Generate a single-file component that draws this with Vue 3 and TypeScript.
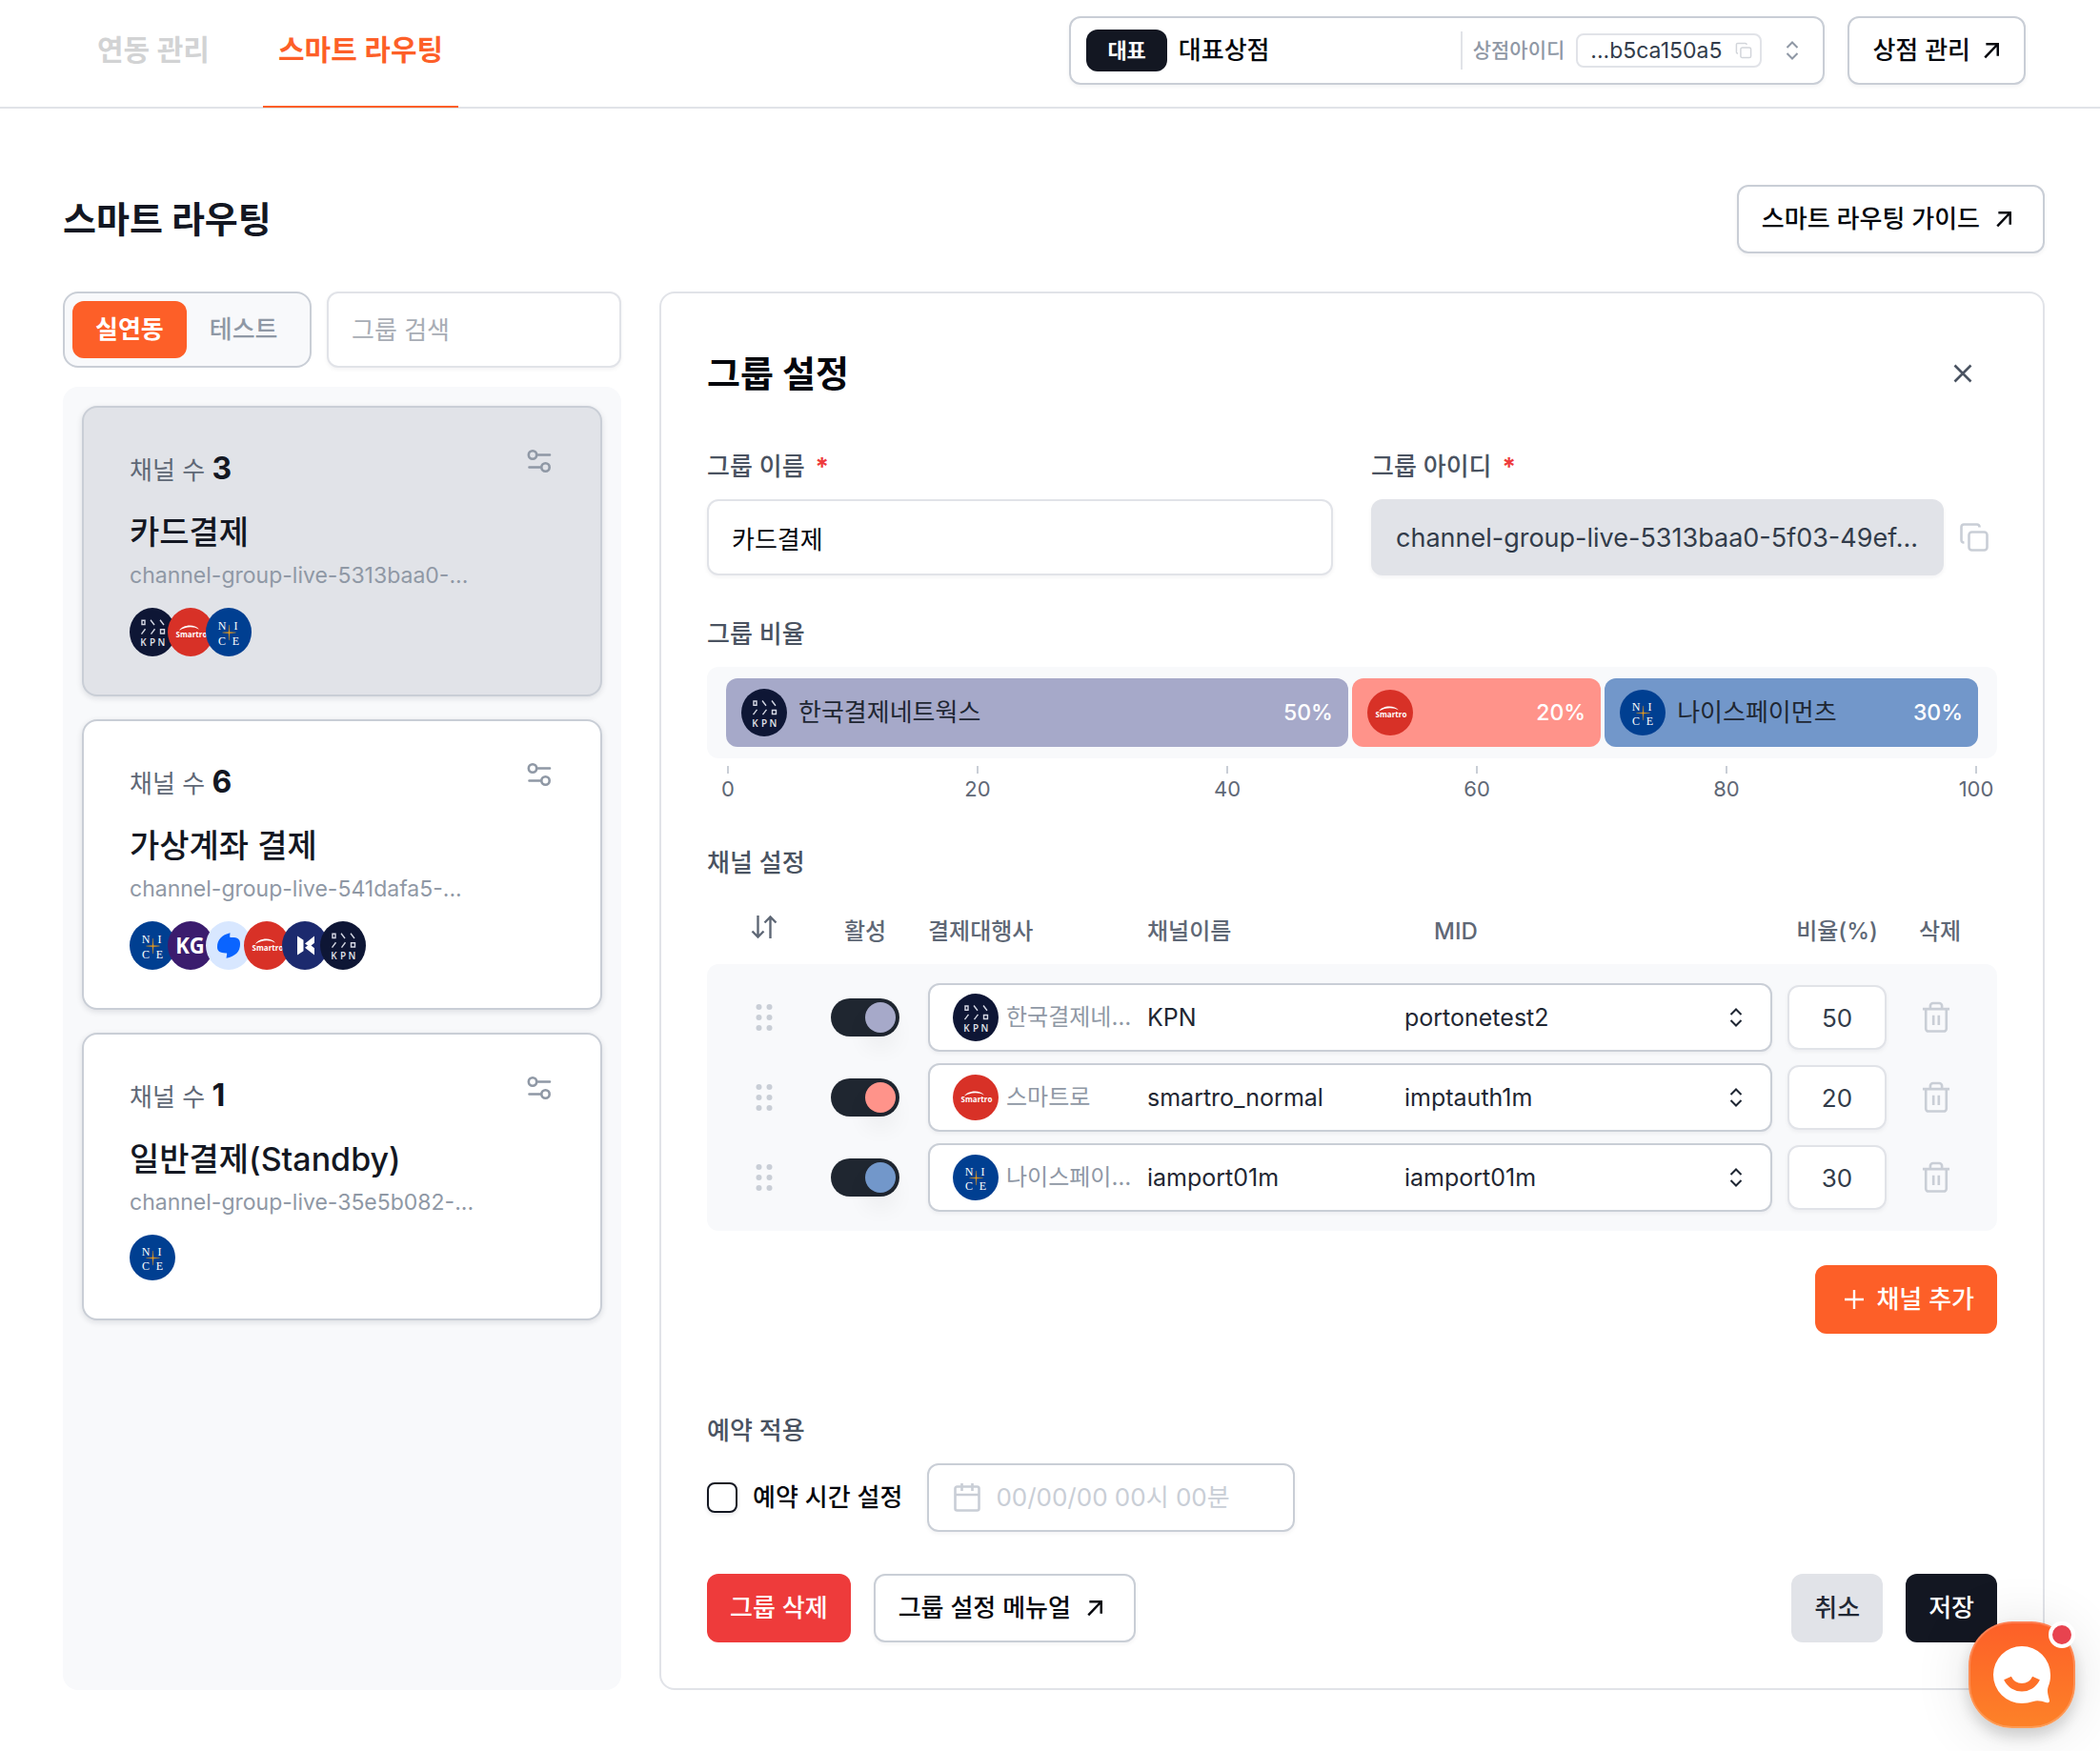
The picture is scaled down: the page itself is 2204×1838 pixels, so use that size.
<script setup lang="ts">
import { h, ref, type FunctionalComponent, type VNode } from 'vue'

type PgId = 'kpn' | 'smartro' | 'nice' | 'kg' | 'toss' | 'kicc'

interface Group {
  id: string
  name: string
  count: number
  pgs: PgId[]
}

interface Channel {
  pg: PgId
  pgName: string
  name: string
  mid: string
  ratio: number
  color: string
  enabled: boolean
}

const disc = (fill: string) => h('ellipse', { cx: 24, cy: 24, rx: 24, ry: 24, fill })
const letter = (cls: string, x: number, y: number, value: string) =>
  h('text', { class: cls, x, y, 'text-anchor': 'middle' }, value)

const logos: Record<PgId, () => VNode[]> = {
  kpn: () => [
    disc('#0e1635'),
    h('path', {
      d: 'M13 12.500h3v4h-3zM22 12l4 5M32 12l4 5M16.500 21l-4 5M26.500 21l-4 5M32.500 21.500h4v4h-4z',
      fill: 'none',
      stroke: '#d5d8e4',
      'stroke-width': 1.4,
    }),
    letter('pg-kpn', 14.5, 38, 'K'),
    letter('pg-kpn', 24, 38, 'P'),
    letter('pg-kpn', 33.5, 38, 'N'),
  ],
  smartro: () => [
    disc('#d83127'),
    h('path', { d: 'M12 22.500c3-5.500 16-7.500 21-1-6-3.500-14-3-21 1z', fill: '#fff' }),
    letter('pg-smartro', 25, 29, 'Smartro'),
  ],
  nice: () => [
    disc('#003f91'),
    letter('pg-nice', 17, 21.5, 'N'),
    letter('pg-nice', 31.5, 21.5, 'I'),
    letter('pg-nice', 17, 36.5, 'C'),
    letter('pg-nice', 31.5, 36.5, 'E'),
    h('path', {
      d: 'M17.500 24.500l6.500-.6.500-7 .5 7 6.500.6-6.500.6-.5 7-.5-7z',
      fill: '#e89a1c',
      stroke: '#e89a1c',
      'stroke-width': 0.3,
    }),
  ],
  kg: () => [disc('#3b1c6e'), letter('pg-kg', 23.5, 32, 'KG')],
  toss: () => [
    disc('#d8e7ff'),
    h('path', {
      d: 'M25.500 11.500C17 13.500 12 18 12 25.500c0 4.500 3 6 9 6h.5c.8 0 .8.5.6 1.500L21.500 36.500C31 34.500 36 30 36 22.500c0-5-2.500-6.500-8.500-6.500H26c-.8 0-1-.5-.8-1.300z',
      fill: '#0a64ff',
    }),
  ],
  kicc: () => [
    disc('#1c2a6e'),
    h('path', { d: 'M16 14.500l6.500 4v11l-6.500 4zM34 14.500l-10 7.500 3 2-3 2 10 7.500v-7l-3.500-2.500 3.500-2.500z', fill: '#fff' }),
  ],
}

const PgLogo: FunctionalComponent<{ pg: PgId; height?: number }> = (props) =>
  h(
    'svg',
    {
      viewBox: '0 0 48 48',
      width: 48,
      height: props.height ?? (props.pg === 'kpn' ? 50 : 48),
      preserveAspectRatio: 'none',
      'aria-hidden': 'true',
    },
    logos[props.pg](),
  )
PgLogo.props = ['pg', 'height']

const groups: Group[] = [
  { id: 'channel-group-live-5313baa0-...', name: '카드결제', count: 3, pgs: ['kpn', 'smartro', 'nice'] },
  { id: 'channel-group-live-541dafa5-...', name: '가상계좌 결제', count: 6, pgs: ['nice', 'kg', 'toss', 'smartro', 'kicc', 'kpn'] },
  { id: 'channel-group-live-35e5b082-...', name: '일반결제(Standby)', count: 1, pgs: ['nice'] },
]

const selected = ref(0)
const keyword = ref('')
const groupName = ref('카드결제')
const groupId = 'channel-group-live-5313baa0-5f03-49ef...'
const scheduled = ref(false)
const scheduleAt = ref('')
const ticks = [0, 20, 40, 60, 80, 100]

const channels = ref<Channel[]>([
  { pg: 'kpn', pgName: '한국결제네트웍스', name: 'KPN', mid: 'portonetest2', ratio: 50, color: '#a6a9c9', enabled: true },
  { pg: 'smartro', pgName: '스마트로', name: 'smartro_normal', mid: 'imptauth1m', ratio: 20, color: '#ff938a', enabled: true },
  { pg: 'nice', pgName: '나이스페이먼츠', name: 'iamport01m', mid: 'iamport01m', ratio: 30, color: '#7297ca', enabled: true },
])
</script>

<template>
  <svg class="sprite" aria-hidden="true">
    <symbol id="ic-external" viewBox="0 0 16 16">
      <path d="M2 14.500L14 2M3 2h11v11" fill="none" stroke="currentColor" stroke-width="2.200" />
    </symbol>
    <symbol id="ic-chevrons" viewBox="0 0 16 24">
      <path d="M2.500 9L8 3.500 13.500 9M2.500 15L8 20.500 13.500 15" fill="none" stroke="currentColor" stroke-width="2" />
    </symbol>
    <symbol id="ic-copy" viewBox="0 0 32 32">
      <g fill="none" stroke="currentColor" stroke-width="2.600" stroke-linejoin="round">
        <rect x="10.500" y="10.500" width="19" height="19" rx="3" />
        <path d="M5.500 21.500H5a2.500 2.500 0 0 1-2.500-2.500V5A2.500 2.500 0 0 1 5 2.500h14A2.500 2.500 0 0 1 21.500 5v.5" />
      </g>
    </symbol>
    <symbol id="ic-trash" viewBox="0 0 32 36">
      <path d="M1 8.500h30M9.500 8V5a3 3 0 0 1 3-3h7a3 3 0 0 1 3 3v3M4.500 9v21.500a3 3 0 0 0 3 3h17a3 3 0 0 0 3-3V9M13 15.500v11M19 15.500v11" fill="none" stroke="currentColor" stroke-width="2.800" />
    </symbol>
    <symbol id="ic-settings" viewBox="0 0 32 32">
      <g fill="none" stroke="currentColor" stroke-width="2.600" stroke-linecap="round">
        <circle cx="9" cy="9.500" r="4.200" />
        <circle cx="22.500" cy="22.500" r="4.200" />
        <path d="M14 9.500h13M5.500 22.500h12" />
      </g>
    </symbol>
  </svg>

  <div class="page">
    <header class="topbar">
      <nav class="tabs">
        <a href="#integration" class="tab">연동 관리</a>
        <a href="#routing" class="tab active">스마트 라우팅</a>
      </nav>
      <div class="store">
        <span class="badge">대표</span>
        <span class="store-name">대표상점</span>
        <span class="divider"></span>
        <span class="store-label">상점아이디</span>
        <button type="button" class="store-id" aria-label="상점아이디 복사">
          <span>...b5ca150a5</span>
          <svg width="18" height="18"><use href="#ic-copy" /></svg>
        </button>
        <svg class="store-chevrons" width="16" height="24"><use href="#ic-chevrons" /></svg>
        <select class="cover" aria-label="상점 선택"><option>대표상점</option></select>
      </div>
      <a href="#stores" class="btn outline store-link">상점 관리 <svg width="20" height="18"><use href="#ic-external" /></svg></a>
    </header>

    <main class="content">
      <div class="heading">
        <h1>스마트 라우팅</h1>
        <a href="#guide" class="btn outline wide">스마트 라우팅 가이드 <svg width="18" height="18"><use href="#ic-external" /></svg></a>
      </div>

      <div class="columns">
        <section class="groups">
          <div class="filters">
            <div class="segment">
              <button type="button" class="on">실연동</button>
              <button type="button">테스트</button>
            </div>
            <input v-model="keyword" class="field search" type="text" placeholder="그룹 검색" aria-label="그룹 검색" />
          </div>
          <div class="list">
            <article
              v-for="(g, i) in groups"
              :key="g.id"
              class="card"
              :class="{ selected: i === selected }"
              @click="selected = i"
            >
              <div class="card-head">
                <p class="count">채널 수 <strong>{{ g.count }}</strong></p>
                <button type="button" class="icon-btn" aria-label="설정">
                  <svg width="32" height="32"><use href="#ic-settings" /></svg>
                </button>
              </div>
              <h2>{{ g.name }}</h2>
              <p class="gid">{{ g.id }}</p>
              <div class="avatars">
                <PgLogo v-for="p in g.pgs" :key="p" class="avatar" :pg="p" :height="g.pgs.includes('kpn') ? 51 : 48" />
              </div>
            </article>
          </div>
        </section>

        <form class="panel" @submit.prevent>
          <div class="panel-head">
            <h2>그룹 설정</h2>
            <button type="button" class="icon-btn close" aria-label="닫기">
              <svg width="20" height="20" viewBox="0 0 20 20"><path d="M1.500 1.500l17 17M18.500 1.500l-17 17" fill="none" stroke="currentColor" stroke-width="2.600" /></svg>
            </button>
          </div>

          <div class="pair">
            <div>
              <label class="label" for="group-name">그룹 이름 <em>*</em></label>
              <input id="group-name" v-model="groupName" class="field" type="text" />
            </div>
            <div>
              <label class="label" for="group-id">그룹 아이디 <em>*</em></label>
              <div class="id-row">
                <input id="group-id" class="field readonly" type="text" :value="groupId" readonly />
                <button type="button" class="icon-btn copy" aria-label="복사"><svg width="32" height="32"><use href="#ic-copy" /></svg></button>
              </div>
            </div>
          </div>

          <h3 class="label ratio-title">그룹 비율</h3>
          <div class="track">
            <div v-for="c in channels" :key="c.pg" class="bar" :style="{ width: c.ratio + '%', background: c.color }">
              <PgLogo :pg="c.pg" />
              <span v-if="c.ratio > 20" class="bar-name">{{ c.pgName }}</span>
              <span class="bar-pct">{{ c.ratio }}%</span>
            </div>
          </div>
          <div class="axis">
            <span v-for="t in ticks" :key="t" class="tick"><i></i><span>{{ t }}</span></span>
          </div>

          <h3 class="label channel-title">채널 설정</h3>
          <table class="channels">
            <thead>
              <tr>
                <th class="sort-col" aria-label="순서">
                  <svg width="28" height="26" viewBox="0 0 28 26"><path d="M7.500 1v22M1.500 17.500l6 6 6-6M20.500 25V2.500M14.500 8.500l6-6 6 6" fill="none" stroke="currentColor" stroke-width="2.400" /></svg>
                </th>
                <th class="active-col">활성</th>
                <th class="left">결제대행사</th>
                <th class="left">채널이름</th>
                <th class="left">MID</th>
                <th class="ratio-col">비율(%)</th>
                <th class="delete-col">삭제</th>
              </tr>
            </thead>
            <tbody>
              <tr v-for="c in channels" :key="c.pg">
                <td>
                  <svg class="grip" width="20" height="32" viewBox="0 0 20 32">
                    <g fill="currentColor">
                      <circle cx="4.500" cy="5" r="3" /><circle cx="15.500" cy="5" r="3" />
                      <circle cx="4.500" cy="16" r="3" /><circle cx="15.500" cy="16" r="3" />
                      <circle cx="4.500" cy="27" r="3" /><circle cx="15.500" cy="27" r="3" />
                    </g>
                  </svg>
                </td>
                <td class="active-col">
                  <label class="switch">
                    <input v-model="c.enabled" type="checkbox" :aria-label="c.pgName + ' 활성'" />
                    <span class="knob" :style="{ background: c.color }"></span>
                  </label>
                </td>
                <td colspan="3" class="select-col">
                  <div class="select">
                    <PgLogo :pg="c.pg" />
                    <span class="pg-name">{{ c.pgName }}</span>
                    <span class="ch-name">{{ c.name }}</span>
                    <span class="mid">{{ c.mid }}</span>
                    <svg width="16" height="24"><use href="#ic-chevrons" /></svg>
                    <select class="cover" :aria-label="c.pgName + ' 채널'"><option>{{ c.name }}</option></select>
                  </div>
                </td>
                <td class="ratio-col"><input v-model="c.ratio" class="ratio" type="text" :aria-label="c.pgName + ' 비율'" /></td>
                <td class="trash-col">
                  <button type="button" class="icon-btn trash" aria-label="삭제"><svg width="30" height="34"><use href="#ic-trash" /></svg></button>
                </td>
              </tr>
            </tbody>
          </table>
          <div class="add-row">
            <button type="button" class="btn primary">
              <svg width="22" height="22" viewBox="0 0 22 22"><path d="M11 1v20M1 11h20" fill="none" stroke="currentColor" stroke-width="2.400" /></svg>
              채널 추가
            </button>
          </div>

          <h3 class="label schedule-title">예약 적용</h3>
          <div class="schedule">
            <label class="check"><input v-model="scheduled" type="checkbox" />예약 시간 설정</label>
            <div class="date">
              <svg width="32" height="32" viewBox="0 0 32 32"><path d="M3.500 6.500a2 2 0 0 1 2-2h21a2 2 0 0 1 2 2v21a2 2 0 0 1-2 2h-21a2 2 0 0 1-2-2zM3.500 13h25M10.500 1v8M21.500 1v8" fill="none" stroke="currentColor" stroke-width="2.600" /></svg>
              <input v-model="scheduleAt" type="text" placeholder="00/00/00 00시 00분" aria-label="예약 시간" :disabled="!scheduled" />
            </div>
          </div>

          <div class="actions">
            <button type="button" class="btn danger">그룹 삭제</button>
            <a href="#manual" class="btn outline wide">그룹 설정 메뉴얼 <svg width="18" height="18"><use href="#ic-external" /></svg></a>
            <button type="button" class="btn muted">취소</button>
            <button type="submit" class="btn dark">저장</button>
          </div>
        </form>
      </div>
    </main>

    <button type="button" class="chat" aria-label="채팅 상담">
      <svg width="64" height="64" viewBox="0 0 64 64">
        <path d="M32 2a30 30 0 0 1 30 30c0 6-1 9-2.500 13-1.500 5 .5 9 1.500 14 .3 2-1.500 2.500-3 2.200-5-1.200-9-2.700-14-1.200-4 1.300-8 2-12 2a30 30 0 0 1 0-60z" fill="#fff" />
        <path d="M17 35.500c6 13 24 13 30 0" fill="none" stroke="#fd7028" stroke-width="8.500" />
      </svg>
      <span class="dot"></span>
    </button>
  </div>
</template>

<style>
body {
  margin: 0;
  background: #fff;
}
.page svg {
  display: block;
  flex: none;
}

/* payment gateway marks */
.pg-kpn {
  font: 600 10px 'Open Sans', sans-serif;
  fill: #e4e6ee;
}
.pg-smartro {
  font: 700 8px 'Open Sans', sans-serif;
  fill: #fff;
}
.pg-nice {
  font: 12px 'Liberation Serif', serif;
  fill: #fff;
}
.pg-kg {
  font: 700 22px 'Open Sans', sans-serif;
  fill: #fff;
}
</style>

<style scoped>
* {
  box-sizing: border-box;
}
.sprite {
  position: absolute;
  width: 0;
  height: 0;
}
.page,
.page button,
.page input,
.page select {
  font-family: Inter, 'Noto Sans CJK KR', sans-serif;
  line-height: 40px;
}
.page {
  min-height: 100vh;
  font-size: 26px;
  color: #131722;
}
h1,
h2,
h3,
p {
  margin: 0;
}
button {
  cursor: pointer;
}

/* top bar */
.topbar {
  display: flex;
  align-items: center;
  height: 114px;
  padding: 0 78px 6px 86px;
  border-bottom: 2px solid #e1e3e8;
}
.tabs {
  display: flex;
  align-self: stretch;
  gap: 40px;
  margin-right: auto;
  margin-bottom: -7px;
}
.tab {
  display: flex;
  align-items: center;
  padding: 0 16px 8px;
  border-bottom: 2px solid transparent;
  font-size: 30px;
  font-weight: 600;
  color: #d2d3d4;
  text-decoration: none;
}
.tab.active {
  border-color: #fd5f28;
  color: #fd5f28;
}
.store {
  position: relative;
  display: flex;
  align-items: center;
  width: 793px;
  height: 72px;
  padding: 0 24px 0 16px;
  border: 2px solid #c9ced6;
  border-radius: 12px;
  box-shadow: 0 2px 4px rgba(16, 24, 40, 0.05);
}
.badge {
  padding: 0 22px;
  border-radius: 12px;
  background: #131722;
  font-size: 22px;
  font-weight: 700;
  line-height: 44px;
  color: #fff;
}
.store-name {
  margin: 0 auto 0 12px;
  font-weight: 500;
  color: #04060c;
}
.divider {
  width: 2px;
  height: 40px;
  background: #e1e3e8;
}
.store-label {
  margin: 0 12px 0 11px;
  font-size: 21px;
  font-weight: 500;
  color: #8f98a5;
}
.page .store-id {
  position: relative;
  z-index: 1;
  display: flex;
  align-items: center;
  gap: 14px;
  height: 36px;
  padding: 0 8px 0 13px;
  border: 2px solid #e1e3e8;
  border-radius: 8px;
  background: #fff;
  font-size: 23px;
  line-height: 32px;
  color: #323c4a;
}
.store-id svg {
  color: #d2d5da;
}
.store-chevrons {
  margin-left: 24px;
  color: #8f98a5;
}
.cover {
  position: absolute;
  inset: 0;
  width: 100%;
  height: 100%;
  opacity: 0;
}
.store-link {
  margin-left: 24px;
}

/* buttons */
.btn {
  display: flex;
  align-items: center;
  gap: 12px;
  height: 72px;
  padding: 0 24px;
  border: 0;
  border-radius: 12px;
  font-size: 26px;
  font-weight: 500;
  text-decoration: none;
  white-space: nowrap;
}
.outline {
  border: 2px solid #c9ced6;
  background: #fff;
  color: #04060c;
  box-shadow: 0 2px 4px rgba(16, 24, 40, 0.05);
}
.outline.wide {
  gap: 16px;
  padding-right: 32px;
}
.primary {
  padding-left: 30px;
  background: #fd5f28;
  color: #fff;
}
.danger {
  background: #ee3b3b;
  color: #fff;
}
.muted {
  margin-left: auto;
  background: #e1e3e8;
  color: #1f2733;
}
.dark {
  background: #131722;
  color: #fff;
}
.icon-btn {
  display: flex;
  align-items: center;
  justify-content: center;
  padding: 0;
  border: 0;
  background: none;
}

/* page */
.content {
  padding: 80px 58px 64px 66px;
}
.heading {
  display: flex;
  align-items: center;
  justify-content: space-between;
  margin-bottom: 40px;
}
h1 {
  font-size: 38px;
  font-weight: 700;
}
.columns {
  display: flex;
  gap: 40px;
}
.groups {
  display: flex;
  flex: none;
  flex-direction: column;
  gap: 20px;
  width: 586px;
}
.filters {
  display: flex;
  gap: 16px;
}
.segment {
  display: flex;
  flex: none;
  width: 261px;
  height: 80px;
  padding: 8px;
  border: 2px solid #c9ced6;
  border-radius: 16px;
  background: #f8f9fb;
}
.segment button {
  padding: 0 24px;
  border: 0;
  border-radius: 12px;
  background: none;
  font-size: 26px;
  font-weight: 500;
  color: #8f98a5;
}
.segment .on {
  background: #fd5f28;
  font-weight: 700;
  color: #fff;
}
.field {
  display: block;
  width: 100%;
  min-width: 0;
  height: 80px;
  padding: 0 24px;
  border: 2px solid #e1e3e8;
  border-radius: 12px;
  background: #fff;
  font-size: 26px;
  color: #04060c;
  box-shadow: 0 2px 4px rgba(16, 24, 40, 0.05);
}
.field::placeholder {
  color: #a8adb5;
  opacity: 1;
}
.list {
  display: flex;
  flex: 1;
  flex-direction: column;
  gap: 24px;
  padding: 20px;
  border-radius: 16px;
  background: #f8f9fb;
}
.card {
  padding: 40px 48px;
  border: 2px solid #c9ced6;
  border-radius: 16px;
  background: #fff;
  box-shadow: 0 2px 6px rgba(16, 24, 40, 0.12);
}
.card.selected {
  background: #e1e3e8;
}
.card-head {
  display: flex;
  justify-content: space-between;
  height: 66px;
}
.count {
  align-self: flex-start;
  padding-top: 4px;
  color: #5f6876;
}
.count strong {
  font-size: 32px;
  font-weight: 700;
  color: #131722;
}
.card-head .icon-btn {
  height: 32px;
  color: #8f98a5;
}
.card h2 {
  font-size: 34px;
  font-weight: 500;
  line-height: 50px;
}
.gid {
  font-size: 23px;
  color: #8f98a5;
}
.avatars {
  display: flex;
  margin-top: 14px;
}
.avatar + .avatar {
  margin-left: -8px;
}

/* settings panel */
.panel {
  flex: 1;
  min-width: 0;
  padding: 48px;
  border: 2px solid #e1e3e8;
  border-radius: 16px;
}
.panel-head {
  display: flex;
  align-items: center;
  justify-content: space-between;
  height: 72px;
  margin-bottom: 40px;
}
.panel-head h2 {
  font-size: 38px;
  font-weight: 700;
  color: #04060c;
}
.close {
  width: 72px;
  height: 72px;
  color: #4a5361;
}
.pair {
  display: grid;
  grid-template-columns: 1fr 1fr;
  gap: 40px;
}
.label {
  display: block;
  margin-bottom: 14px;
  padding-top: 2px;
  font-size: 26px;
  font-weight: 500;
  line-height: 40px;
  color: #4a5361;
}
.label em {
  margin-left: 4px;
  font-style: normal;
  font-weight: 700;
  color: #ee3b3b;
}
.id-row {
  display: flex;
}
.readonly {
  background: #e1e3e8;
  font-size: 27px;
  color: #323c4a;
}
.copy {
  flex: none;
  width: 56px;
  padding: 0 8px 0 16px;
  color: #c9ced6;
}
.ratio-title {
  margin-top: 40px;
}
.track {
  display: flex;
  gap: 4px;
  padding: 12px 20px;
  border-radius: 12px;
  background: #f8f9fb;
}
.bar {
  display: flex;
  align-items: center;
  gap: 12px;
  min-width: 0;
  height: 72px;
  padding: 0 16px;
  border-radius: 12px;
  white-space: nowrap;
}
.bar-name {
  color: #1f2733;
}
.bar-pct {
  margin-left: auto;
  font-size: 23px;
  font-weight: 500;
  color: #fff;
}
.axis {
  display: flex;
  justify-content: space-between;
  margin: 8px 21px 0;
}
.tick {
  display: flex;
  flex-direction: column;
  align-items: center;
  gap: 4px;
  width: 2px;
  font-size: 22px;
  line-height: 24px;
  color: #5f6876;
}
.tick i {
  width: 2px;
  height: 8px;
  background: #c9ced6;
}
.channel-title {
  margin: 44px 0 30px;
}

.channels,
.channels thead {
  display: block;
}
.channels tbody {
  display: flex;
  flex-direction: column;
  gap: 12px;
  margin-top: 14px;
  padding: 20px 0;
  border-radius: 12px;
  background: #f8f9fb;
}
.channels tr {
  display: grid;
  grid-template-columns: 120px 112px 230px 301px 1fr 120px 96px;
  align-items: center;
  padding-right: 20px;
}
.channels th,
.channels td {
  padding: 0;
}
.channels th {
  padding-top: 2px;
  font-size: 24px;
  font-weight: 500;
  line-height: 40px;
  color: #5f6876;
}
.channels .sort-col {
  align-self: start;
}
.channels th svg {
  margin: 2px auto 0;
}
.channels .left {
  text-align: left;
}
.channels .active-col {
  padding-right: 20px;
}
.channels .ratio-col,
.channels .delete-col,
.channels .trash-col {
  padding-left: 16px;
}
.select-col {
  grid-column: 3 / 6;
}
.grip {
  margin: 0 auto;
  color: #c9ced6;
}
.switch {
  position: relative;
  display: block;
  width: 72px;
  height: 40px;
  margin: 0 auto;
}
.switch input {
  display: block;
  width: 72px;
  height: 40px;
  margin: 0;
  appearance: none;
  border-radius: 20px;
  background: #c9ced6;
}
.switch input:checked {
  background: #1f2630;
}
.knob {
  position: absolute;
  top: 4px;
  left: 4px;
  width: 32px;
  height: 32px;
  border-radius: 50%;
  box-shadow: 0 16px 24px rgba(16, 24, 40, 0.06);
  pointer-events: none;
}
.switch input:checked + .knob {
  left: 36px;
}
.select {
  position: relative;
  display: flex;
  align-items: center;
  height: 72px;
  padding: 0 28px 0 24px;
  border: 2px solid #c9ced6;
  border-radius: 12px;
  background: #fff;
  font-size: 25px;
  color: #1f2733;
  box-shadow: 0 2px 4px rgba(16, 24, 40, 0.05);
}
.pg-name {
  flex: none;
  width: 132px;
  margin: 0 16px 0 8px;
  overflow: hidden;
  font-size: 24px;
  color: #8f98a5;
  text-overflow: ellipsis;
  white-space: nowrap;
}
.ch-name {
  flex: none;
  width: 270px;
}
.mid {
  flex: 1;
}
.ratio {
  display: block;
  width: 104px;
  height: 68px;
  padding: 0;
  border: 2px solid #e1e3e8;
  border-radius: 12px;
  background: #fff;
  font-size: 26px;
  text-align: center;
  color: #323c4a;
  box-shadow: 0 2px 4px rgba(16, 24, 40, 0.05);
}
.trash {
  width: 72px;
  height: 72px;
  color: #c9ced6;
}
.add-row {
  display: flex;
  justify-content: flex-end;
  margin-top: 36px;
}
.schedule-title {
  margin-top: 80px;
}
.schedule {
  display: flex;
  align-items: center;
  gap: 26px;
}
.check {
  display: flex;
  align-items: center;
  gap: 16px;
  font-weight: 500;
  color: #04060c;
}
.check input {
  width: 32px;
  height: 32px;
  margin: 0;
  appearance: none;
  border: 2px solid #131722;
  border-radius: 8px;
  box-shadow: 0 2px 4px rgba(16, 24, 40, 0.1);
}
.check input:checked {
  background: #131722;
}
.date {
  display: flex;
  align-items: center;
  gap: 14px;
  width: 386px;
  height: 72px;
  padding: 0 24px;
  border: 2px solid #c9ced6;
  border-radius: 12px;
  color: #c9ced6;
  box-shadow: 0 2px 4px rgba(16, 24, 40, 0.05);
}
.date input {
  flex: 1;
  min-width: 0;
  padding: 0;
  border: 0;
  background: none;
  font-size: 26px;
}
.date input::placeholder {
  color: #c9ced6;
  opacity: 1;
}
.actions {
  display: flex;
  gap: 24px;
  margin-top: 44px;
}

/* chat launcher */
.chat {
  position: fixed;
  right: 26px;
  bottom: 24px;
  display: flex;
  align-items: center;
  justify-content: center;
  width: 112px;
  height: 112px;
  padding: 0;
  border: 2px solid rgba(255, 255, 255, 0.2);
  border-radius: 46px;
  background: linear-gradient(#fd5f28, #fd8228) border-box;
  box-shadow: 0 8px 16px rgba(0, 0, 0, 0.16), 0 4px 60px rgba(0, 0, 0, 0.12);
}
.dot {
  position: absolute;
  top: -2px;
  right: -2px;
  width: 28px;
  height: 28px;
  border: 4px solid #fff;
  border-radius: 50%;
  background: #e8434f;
}
</style>
